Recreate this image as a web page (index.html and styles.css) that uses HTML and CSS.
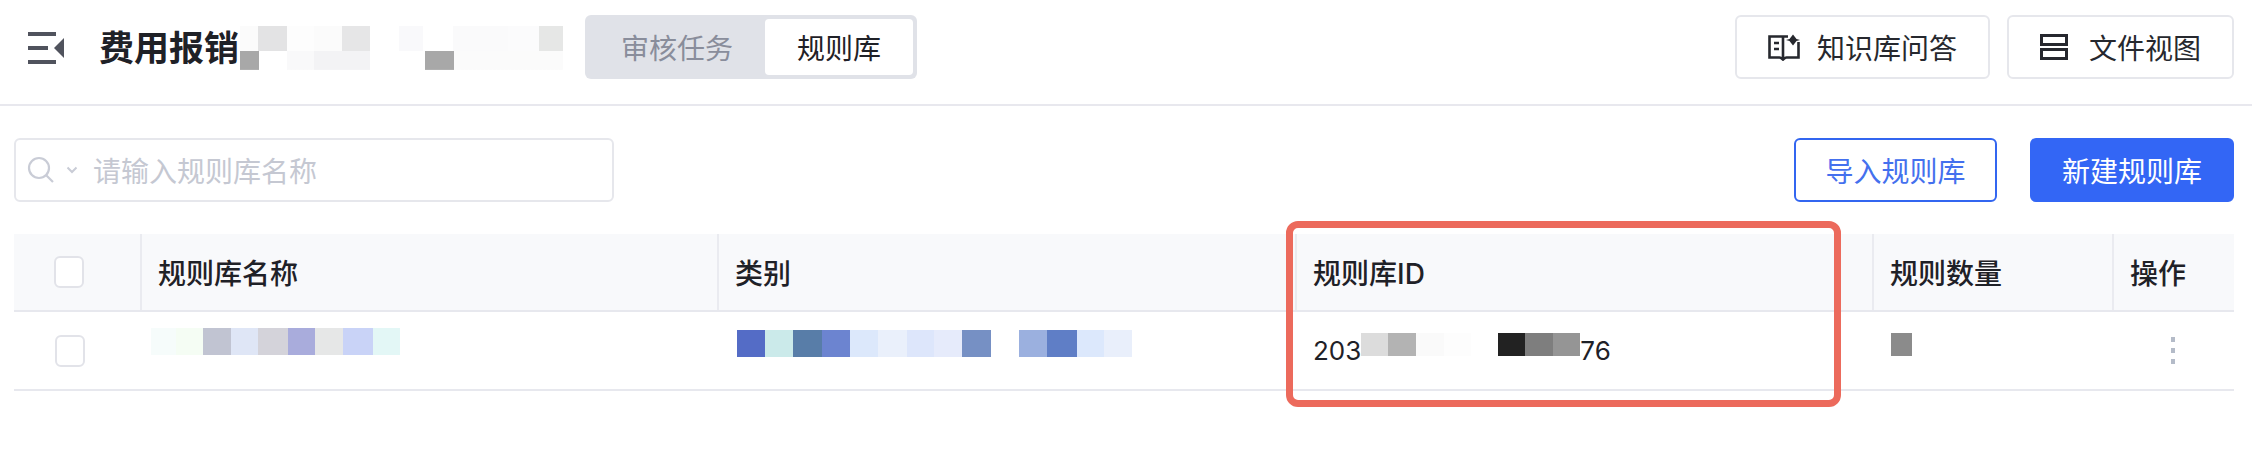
FILE: index.html
```html
<!DOCTYPE html>
<html lang="zh-CN">
<head>
<meta charset="utf-8">
<title>费用报销</title>
<link rel="stylesheet" href="styles.css">
</head>
<body>
<header class="topbar">
  <svg class="menu-icon" width="36" height="32" viewBox="0 0 36 32"><path d="M0 0h28v4H0zM0 14h20v4H0zM0 28h28v4H0z" fill="#50535d"/><path d="M36 6v20L26 16z" fill="#50535d"/></svg>
  <h1 class="title">费用报销</h1>
  <div class="mosaic title-mosaic"></div>
  <div class="segment">
    <span class="seg-item">审核任务</span>
    <span class="seg-item active">规则库</span>
  </div>
  <div class="top-actions">
    <button class="btn btn-ghost kb">
      <svg width="32" height="28" viewBox="0 0 32 28" fill="none" stroke="#26282e" stroke-width="2.6"><path d="M15 3.500H1.500V24.500H11.500C13 24.500 14 25.500 15 26.500C16 25.500 17 24.500 18.500 24.500H30.500V9"/><path d="M15 3.500V26M15 3.500H20"/><path d="M6 10h5M6 16h5" stroke-width="2.4"/><path d="M25 1.500L28.500 6L32 7L28.500 8L25 12.500L21.500 8L18 7L21.500 6z" fill="#26282e" stroke="none"/></svg>
      <span>知识库问答</span>
    </button>
    <button class="btn btn-ghost fileview">
      <svg width="28" height="26" viewBox="0 0 28 26" fill="none" stroke="#26282e" stroke-width="3"><rect x="1.500" y="1.500" width="25" height="9"/><rect x="1.500" y="15.500" width="25" height="9"/></svg>
      <span>文件视图</span>
    </button>
  </div>
</header>

<main class="content">
  <div class="toolbar">
    <div class="search">
      <svg class="search-icon" width="28" height="28" viewBox="0 0 28 28" fill="none" stroke="#c9ccd6" stroke-width="2.200"><circle cx="12" cy="12" r="10"/><path d="M19 19l7 7"/></svg>
      <svg class="chevron" width="12" height="8" viewBox="0 0 12 8" fill="none" stroke="#c9ccd6" stroke-width="2"><path d="M1.500 1.500L6 6l4.500-4.500"/></svg>
      <span class="placeholder">请输入规则库名称</span>
    </div>
    <div class="toolbar-actions">
      <button class="btn btn-outline">导入规则库</button>
      <button class="btn btn-primary">新建规则库</button>
    </div>
  </div>

  <div class="table-wrap">
    <div class="row head">
      <div class="cell check"><span class="checkbox"></span></div>
      <div class="cell">规则库名称</div>
      <div class="cell">类别</div>
      <div class="cell">规则库ID</div>
      <div class="cell">规则数量</div>
      <div class="cell">操作</div>
    </div>
    <div class="row body">
      <div class="cell check"><span class="checkbox"></span></div>
      <div class="cell name-cell"><div class="mosaic name-mosaic"></div></div>
      <div class="cell type-cell"><div class="mosaic type-mosaic"></div></div>
      <div class="cell id-cell">203<div class="mosaic id-mosaic"></div>76</div>
      <div class="cell count-cell"><div class="mosaic count-mosaic"></div></div>
      <div class="cell more-cell"><span class="dots"><i></i><i></i><i></i></span></div>
    </div>
    <div class="highlight"></div>
  </div>
</main>
</body>
</html>
```
FILE: styles.css
```css
* { box-sizing: border-box; }
html, body { margin: 0; padding: 0; background: #fff; }
body {
  width: 2252px;
  height: 466px;
  overflow: hidden;
  font-family: "Inter", "Noto Sans CJK SC", sans-serif;
  font-size: 28px;
  color: #1f2127;
}
.topbar {
  height: 106px;
  border-bottom: 2px solid #e8e8ee;
  display: flex;
  align-items: center;
  padding: 0 18px 0 28px;
}
.menu-icon { flex: none; margin-top: -8px; }
.title {
  margin: -8px 0 0 35px;
  width: 141px;
  white-space: nowrap;
  font-size: 35px;
  font-weight: 700;
  line-height: 48px;
  overflow: hidden;
}
.title-mosaic {
  width: 323px;
  height: 44px;
  margin: -8px 22px 0 0;
  background:
    linear-gradient(90deg, #fbfbfb 0 5.600%, #e3e3e4 5.600% 14.400%, #fdfdfd 14.400% 23%, #fbfbfb 23% 31.500%, #e6e6e7 31.500% 40.300%, #fff 40.300% 49.300%, #f9f9fb 49.300% 56.800%, #fff 56.800% 66%, #fafafb 66% 83%, #fbfbfc 83% 92.500%, #e6e7e6 92.500% 100%) top / 100% 57% no-repeat,
    linear-gradient(90deg, #a8a8a8 0 5.800%, #fff 5.800% 14.600%, #f9f9fa 14.600% 23%, #f3f3f5 23% 40.300%, #fff 40.300% 57.400%, #a8a8a8 57.400% 66.200%, #fbfbfb 66.200% 100%) bottom / 100% 43% no-repeat;
}
.segment {
  width: 332px;
  height: 64px;
  margin-top: -10px;
  border-radius: 6px;
  background: #e0e2e8;
  padding: 4px;
  display: flex;
  justify-content: flex-end;
  align-items: stretch;
}
.seg-item {
  display: flex;
  align-items: center;
  justify-content: center;
  color: #898d9b;
  flex: 1;
}
.seg-item.active {
  flex: none;
  width: 148px;
  padding: 0;
  background: #fff;
  color: #1f2127;
  border-radius: 4px;
}
.top-actions {
  margin-left: auto;
  margin-top: -10px;
  display: flex;
  gap: 17px;
}
.btn {
  height: 64px;
  font: inherit;
  border-radius: 6px;
  display: flex;
  align-items: center;
  justify-content: center;
  padding: 0;
  background: #fff;
}
.btn-ghost { border: 2px solid #e6e7ec; color: #26282e; }
.kb { width: 255px; gap: 17px; }
.fileview { width: 227px; gap: 21px; }
.content { padding: 32px 18px 0 14px; }
.toolbar {
  display: flex;
  justify-content: space-between;
  height: 64px;
  margin-bottom: 32px;
}
.search {
  width: 600px;
  border: 2px solid #e6e7ec;
  border-radius: 6px;
  display: flex;
  align-items: center;
  padding-left: 11px;
}
.chevron { margin-left: 11px; }
.placeholder { margin-left: 15px; color: #c5c8d2; }
.toolbar-actions { display: flex; gap: 33px; }
.btn-outline { width: 203px; border: 2px solid #3366f0; color: #4470ee; }
.btn-primary { width: 204px; border: 0; background: #3366f5; color: #fff; }
.table-wrap { position: relative; width: 2220px; }
.row {
  display: grid;
  grid-template-columns: 126px 577px 578px 577px 240px 122px;
}
.head {
  height: 78px;
  background: #f8f9fb;
  border-bottom: 2px solid #e7e8ee;
  font-weight: 500;
}
.head .cell {
  border-left: 2px solid #eaebf0;
  display: flex;
  align-items: center;
  padding-left: 16px;
  color: #1f2127;
}
.head .check { border-left: 0; }
.body { height: 79px; border-bottom: 2px solid #e7e8ee; }
.body .cell { display: flex; align-items: center; padding-left: 19px; }
.cell.check { padding-left: 40px; }
.head .cell.check { padding-left: 40px; }
.checkbox {
  display: block;
  width: 30px;
  height: 32px;
  border: 2px solid #e2e3e9;
  border-radius: 6px;
  background: #fff;
}
.body .checkbox { margin: 0 0 0 1px; }
.mosaic { flex: none; }
.name-cell { padding-left: 11px !important; padding-bottom: 18px; }
.name-mosaic {
  width: 249px;
  height: 27px;
  background: linear-gradient(90deg, #f6fcfb 0 10%, #f5fdf4 10% 21%, #c1c4d2 21% 32%, #dfe6f6 32% 43%, #d4d3da 43% 55%, #a9acdc 55% 66%, #e6e7e7 66% 77%, #c9d3f7 77% 89%, #e3f7f6 89% 100%);
}
.type-cell { padding-left: 20px !important; padding-bottom: 14px; }
.type-mosaic {
  width: 395px;
  height: 27px;
  background: linear-gradient(90deg, #546cc6 0 7%, #cbeaea 7% 14.200%, #587da8 14.200% 21.400%, #6c84d0 21.400% 28.500%, #dce8fb 28.500% 35.700%, #eaf0fb 35.700% 43%, #dde6fb 43% 50%, #e6ebfb 50% 57%, #7690c4 57% 64.300%, #fff 64.300% 71.500%, #9bb0df 71.500% 78.500%, #5f7ec6 78.500% 86%, #dce8fc 86% 93%, #e9effb 93% 100%);
}
.id-cell { font-family: "Inter", "Liberation Sans", sans-serif; font-size: 26px; padding-left: 18px !important; }
.id-mosaic {
  width: 219px;
  height: 23px;
  margin-top: -12px;
  background: linear-gradient(90deg, #dcdcdc 0 12.500%, #b3b3b3 12.500% 25%, #fafafa 25% 38%, #fdfdfd 38% 50%, #fff 50% 62.500%, #222 62.500% 75%, #7e7e7e 75% 87.500%, #959595 87.500% 100%);
}
.count-mosaic { width: 21px; height: 23px; background: #8b8b8b; margin-top: -12px; }
.more-cell { padding-left: 59px !important; }
.dots { display: flex; flex-direction: column; gap: 6px; }
.dots i { display: block; width: 4px; height: 5px; background: #b4bbc8; }
.highlight {
  position: absolute;
  left: 1272px;
  top: -13px;
  width: 555px;
  height: 186px;
  border: 7px solid #ec6a5c;
  border-radius: 12px;
}
```
